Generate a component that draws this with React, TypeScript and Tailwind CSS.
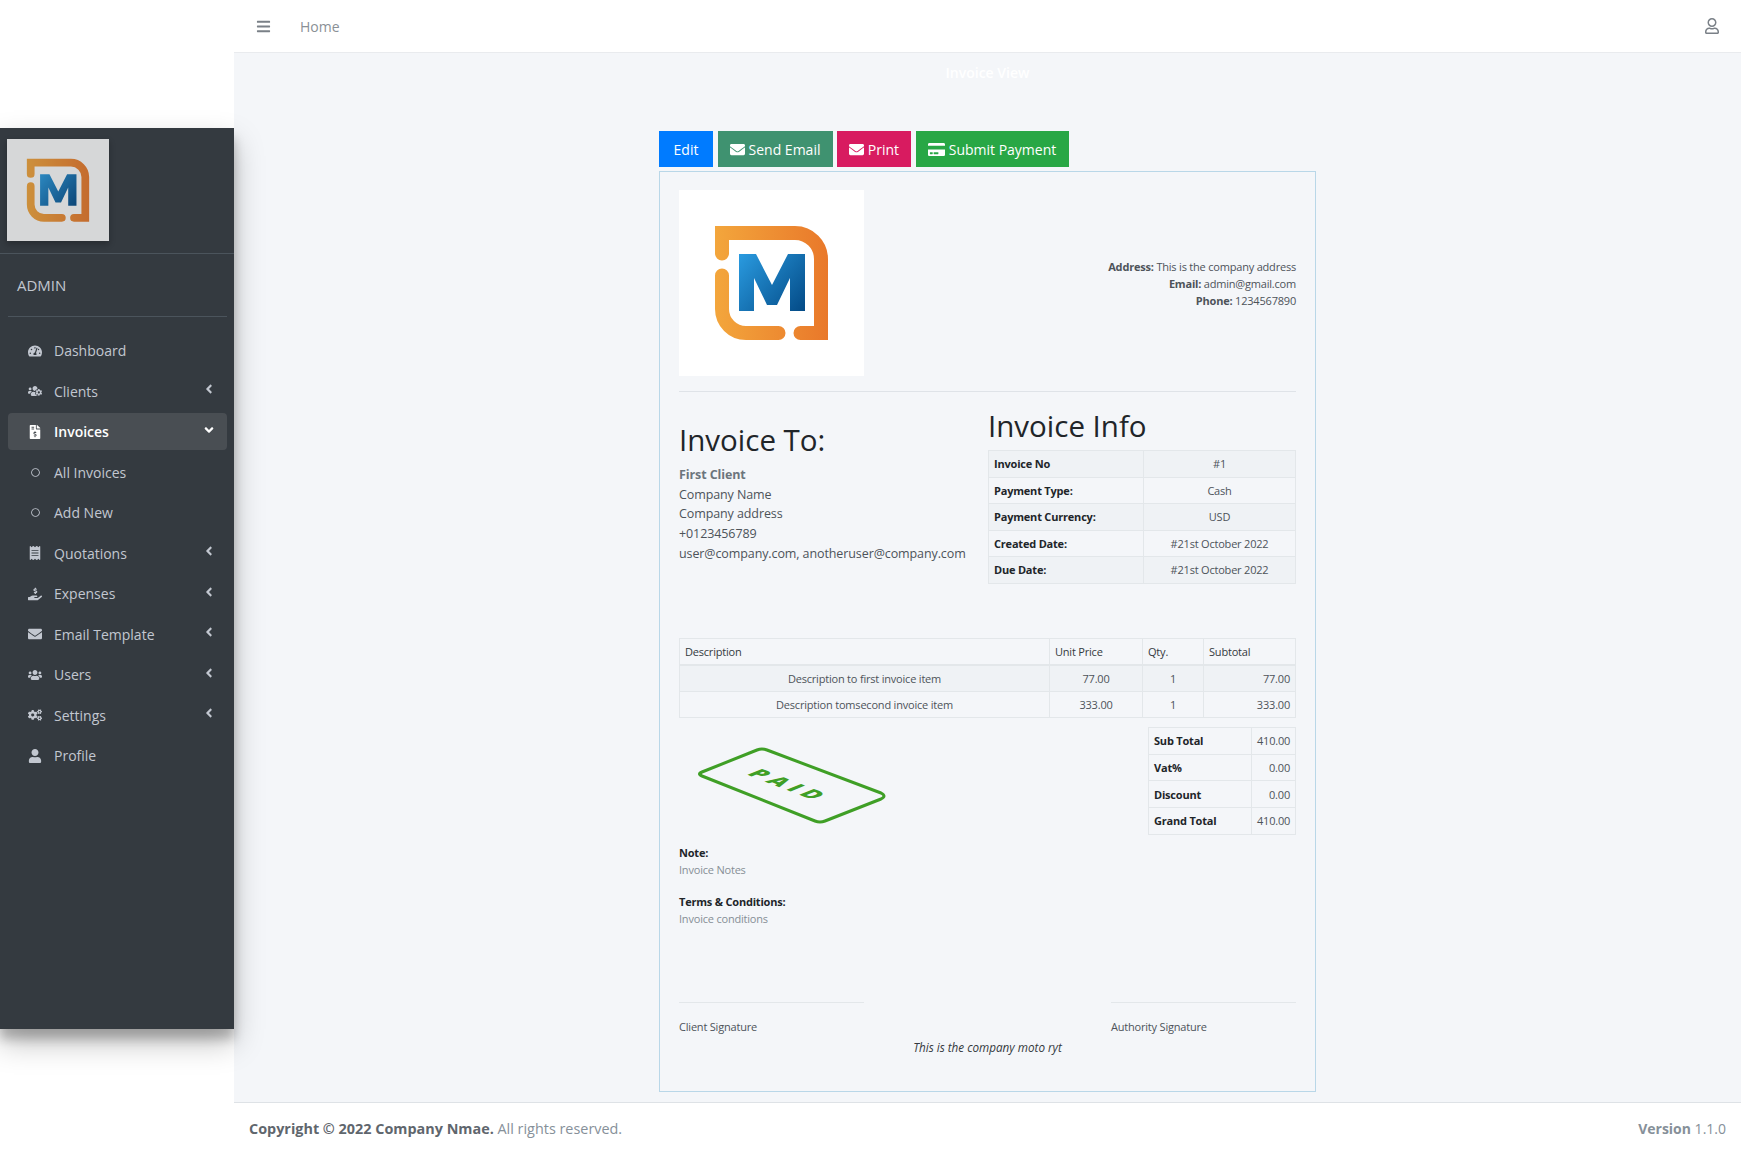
import React from 'react';
import {
  FaAngleDown,
  FaAngleLeft,
  FaBars,
  FaCogs,
  FaCreditCard,
  FaEnvelope,
  FaFileInvoiceDollar,
  FaHandHoldingUsd,
  FaReceipt,
  FaRegCircle,
  FaRegUser,
  FaTachometerAlt,
  FaUser,
  FaUsers,
  FaUsersCog,
} from 'react-icons/fa';

// the M logo, used big on the invoice and small in the sidebar
const Logo = ({ id, size }: { id: string; size: number }) => (
  <svg width={size} height={size} viewBox="0 0 185 185" fill="none">
    <defs>
      <linearGradient id={`${id}-o`} x1="36" y1="0" x2="149" y2="0" gradientUnits="userSpaceOnUse">
        <stop offset="0" stopColor="#f3a63c" />
        <stop offset="1" stopColor="#e9782a" />
      </linearGradient>
      <linearGradient id={`${id}-b`} x1="60" y1="64" x2="126" y2="121" gradientUnits="userSpaceOnUse">
        <stop offset="0" stopColor="#2a9be0" />
        <stop offset="1" stopColor="#034a86" />
      </linearGradient>
    </defs>
    <g stroke={`url(#${id}-o)`} strokeWidth="14" strokeLinecap="round" strokeMiterlimit="4">
      <path d="M43 63.5V43H116A26 26 0 0 1 142 69V143H121.5" />
      <path d="M43 85.5V119A24 24 0 0 0 67 143H99.5" />
    </g>
    <path
      d="M60 64H77L93 95L109 64H126V121H111V88L98 115H88L75 88V121H60Z"
      fill={`url(#${id}-b)`}
    />
  </svg>
);

const PaidStamp = () => (
  <svg width="190" height="78" viewBox="0 0 190 78" fill="none">
    <path
      d="M5 25L60 3Q65 1 70 3L184 46Q190 49 184 52L128 74Q123 76 118 74L5 29Q0 27 5 25Z"
      stroke="#3f9f26"
      strokeWidth="3"
      strokeLinejoin="round"
    />
    <text
      transform="matrix(0.93 0.36 -0.92 0.38 93 38)"
      fontFamily="'Open Sans', sans-serif"
      fontWeight="800"
      fontSize="22"
      letterSpacing="6"
      textAnchor="middle"
      dominantBaseline="central"
      fill="#3f9f26"
    >
      PAID
    </text>
  </svg>
);

const menu = [
  { label: 'Dashboard', icon: <FaTachometerAlt /> },
  { label: 'Clients', icon: <FaUsersCog />, arrow: true },
  { label: 'Invoices', icon: <FaFileInvoiceDollar />, open: true },
  { label: 'All Invoices', icon: <FaRegCircle className="text-[9px]" /> },
  { label: 'Add New', icon: <FaRegCircle className="text-[9px]" /> },
  { label: 'Quotations', icon: <FaReceipt />, arrow: true },
  { label: 'Expenses', icon: <FaHandHoldingUsd />, arrow: true },
  { label: 'Email Template', icon: <FaEnvelope />, arrow: true },
  { label: 'Users', icon: <FaUsers />, arrow: true },
  { label: 'Settings', icon: <FaCogs />, arrow: true },
  { label: 'Profile', icon: <FaUser /> },
];

const Sidebar = () => (
  <aside className="relative z-10 mt-[128px] h-[901px] w-[234px] bg-[#343a40] shadow-[0_14px_28px_rgba(0,0,0,0.25),0_10px_10px_rgba(0,0,0,0.22)]">
    <div className="h-[126px] border-b border-[#4b545c] pl-[7px] pt-[11px]">
      <div className="h-[102px] w-[102px] bg-white opacity-80 shadow-[0_3px_6px_rgba(0,0,0,0.3)]">
        <Logo id="small" size={102} />
      </div>
    </div>
    <div className="ml-2 mr-[7px] flex h-[63px] items-center border-b border-[#4b545c] pl-[9px] text-[15px] text-[#c2c7d0]">
      ADMIN
    </div>
    <nav className="mt-[15px] flex flex-col gap-[3.5px] pl-2 pr-[7px]">
      {menu.map((item) => (
        <div
          key={item.label}
          className={`flex h-[37px] items-center rounded pl-[17px] pr-[11px] text-[14px] ${
            item.open ? 'bg-[#494e53] font-semibold text-white' : 'text-[#c2c7d0]'
          }`}
        >
          <span className="flex w-[20px] justify-center text-[14px]">{item.icon}</span>
          <span className="ml-[9px] flex-1">{item.label}</span>
          {item.arrow && <FaAngleLeft className="-translate-y-[2px] text-[14px]" />}
          {item.open && <FaAngleDown className="-translate-y-[2px] text-[14px]" />}
        </div>
      ))}
    </nav>
  </aside>
);

const ActionButton = ({
  className,
  icon,
  children,
}: {
  className: string;
  icon?: React.ReactNode;
  children: string;
}) => (
  <button
    className={`flex h-[36px] items-center justify-center gap-[4px] text-[14px] text-white ${className}`}
  >
    {icon}
    {children}
  </button>
);

const infoRows = [
  ['Invoice No', '#1'],
  ['Payment Type:', 'Cash'],
  ['Payment Currency:', 'USD'],
  ['Created Date:', '#21st October 2022'],
  ['Due Date:', '#21st October 2022'],
];

const itemRows = [
  ['Description to first invoice item', '77.00', '1', '77.00'],
  ['Description tomsecond invoice item', '333.00', '1', '333.00'],
];

const totalRows = [
  ['Sub Total', '410.00'],
  ['Vat%', '0.00'],
  ['Discount', '0.00'],
  ['Grand Total', '410.00'],
];

const cell = 'border border-[#e3e7ea] px-[5px] text-[11px] tracking-[-0.2px] leading-none';

const Invoice = () => (
  <div className="h-[921px] w-[657px] border border-[#b9d7e8] px-[19px] pt-[18px] text-[#212529]">
    <div className="flex items-center justify-between">
      <div className="h-[186px] w-[185px] bg-white">
        <Logo id="big" size={185} />
      </div>
      <div className="text-right text-[11px] leading-[17px] tracking-[-0.2px] text-[#4d5359]">
        <p>
          <b>Address:</b> This is the company address
        </p>
        <p>
          <b>Email:</b> admin@gmail.com
        </p>
        <p>
          <b>Phone:</b> 1234567890
        </p>
      </div>
    </div>
    <div className="mt-[15px] border-t border-[#dfe3e8]" />

    <div className="flex">
      <div className="w-[309px] pt-[31px]">
        <h2 className="text-[29.5px] font-medium leading-[34px]">Invoice To:</h2>
        <div className="mt-[8px] text-[12.5px] leading-[19.7px] tracking-[-0.1px] text-[#4d5359]">
          <p className="font-bold text-[#6c757d]">First Client</p>
          <p>Company Name</p>
          <p>Company address</p>
          <p>+0123456789</p>
          <p>user@company.com, anotheruser@company.com</p>
        </div>
      </div>
      <div className="w-[308px] pt-[17px]">
        <h2 className="text-[29.5px] font-medium leading-[34px]">Invoice Info</h2>
        <table className="mt-[7px] w-full table-fixed border-collapse">
          <tbody>
            {infoRows.map(([label, value], i) => (
              <tr key={label} className={`h-[26.5px] ${i % 2 === 0 ? 'bg-[#eff2f5]' : ''}`}>
                <td className={`${cell} w-[155px] font-bold`}>{label}</td>
                <td className={`${cell} text-center text-[#4d5359]`}>{value}</td>
              </tr>
            ))}
          </tbody>
        </table>
      </div>
    </div>

    <table className="mt-[54px] w-full table-fixed border-collapse">
      <thead>
        <tr className="h-[26.5px] text-left">
          <th className={`${cell} w-[370px] border-b-2 font-normal text-[#343a40]`}>Description</th>
          <th className={`${cell} w-[93px] border-b-2 font-normal text-[#343a40]`}>Unit Price</th>
          <th className={`${cell} w-[61px] border-b-2 font-normal text-[#343a40]`}>Qty.</th>
          <th className={`${cell} border-b-2 font-normal text-[#343a40]`}>Subtotal</th>
        </tr>
      </thead>
      <tbody className="text-[#4d5359]">
        {itemRows.map((row, i) => (
          <tr key={row[0]} className={`h-[26.5px] ${i === 0 ? 'bg-[#eff2f5]' : ''}`}>
            <td className={`${cell} text-center`}>{row[0]}</td>
            <td className={`${cell} text-center`}>{row[1]}</td>
            <td className={`${cell} text-center`}>{row[2]}</td>
            <td className={`${cell} text-right`}>{row[3]}</td>
          </tr>
        ))}
      </tbody>
    </table>

    <div className="mt-[9px] flex justify-between">
      <div className="ml-[18px] mt-[20px]">
        <PaidStamp />
      </div>
      <table className="w-[148px] table-fixed border-collapse self-start">
        <tbody>
          {totalRows.map(([label, value]) => (
            <tr key={label} className="h-[26.7px]">
              <td className={`${cell} w-[103px] font-bold`}>{label}</td>
              <td className={`${cell} text-right text-[#4d5359]`}>{value}</td>
            </tr>
          ))}
        </tbody>
      </table>
    </div>

    <div className="mt-[9px] text-[11px] leading-[17.5px] tracking-[-0.2px]">
      <p className="font-bold">Note:</p>
      <p className="text-[#868e96]">Invoice Notes</p>
      <p className="mt-[14px] font-bold">Terms &amp; Conditions:</p>
      <p className="text-[#868e96]">Invoice conditions</p>
    </div>

    <div className="mt-[74px] flex justify-between text-[11px] leading-[18px] tracking-[-0.2px] text-[#4d5359]">
      <div className="w-[185px] border-t border-[#e3e7ea] pt-[15px]">Client Signature</div>
      <div className="w-[185px] border-t border-[#e3e7ea] pt-[15px]">Authority Signature</div>
    </div>
    <p className="mt-[2px] text-center text-[11.7px] italic leading-[18px] text-[#343a40]">
      This is the company moto ryt
    </p>
  </div>
);

export default function App() {
  return (
    <div className="flex h-[1154px] w-full overflow-hidden bg-white font-['Open_Sans',sans-serif]">
      <Sidebar />
      <div className="flex flex-1 flex-col">
        <header className="flex h-[53px] items-center border-b border-[#e9ebee] pl-[22px] pr-[21px] text-[#7a8087]">
          <FaBars className="text-[15px]" />
          <span className="ml-[29px] flex-1 pt-px text-[14px] text-[#8a9096]">Home</span>
          <FaRegUser className="text-[16px]" />
        </header>

        <main className="flex flex-1 flex-col items-center bg-[#f4f6f9]">
          <h1 className="mt-[9px] text-[14px] font-semibold leading-[21px] text-white">Invoice View</h1>
          <div className="mt-[48px] flex w-[657px] gap-[4.5px]">
            <ActionButton className="w-[54px] bg-[#007bff]">Edit</ActionButton>
            <ActionButton className="w-[115px] bg-[#3f9270]" icon={<FaEnvelope className="text-[15px]" />}>
              Send Email
            </ActionButton>
            <ActionButton className="w-[74px] bg-[#d81b60]" icon={<FaEnvelope className="text-[15px]" />}>
              Print
            </ActionButton>
            <ActionButton className="w-[153px] bg-[#28a745]" icon={<FaCreditCard className="text-[17px]" />}>
              Submit Payment
            </ActionButton>
          </div>
          <div className="mt-[4px]">
            <Invoice />
          </div>
        </main>

        <footer className="flex h-[52px] items-center justify-between border-t border-[#dee2e6] pl-[15px] pr-[15px] text-[14.4px] text-[#869099]">
          <p>
            <b className="text-[#5f666d]">Copyright © 2022 Company Nmae.</b> All rights reserved.
          </p>
          <p className="text-[14px]">
            <b>Version</b> 1.1.0
          </p>
        </footer>
      </div>
    </div>
  );
}
